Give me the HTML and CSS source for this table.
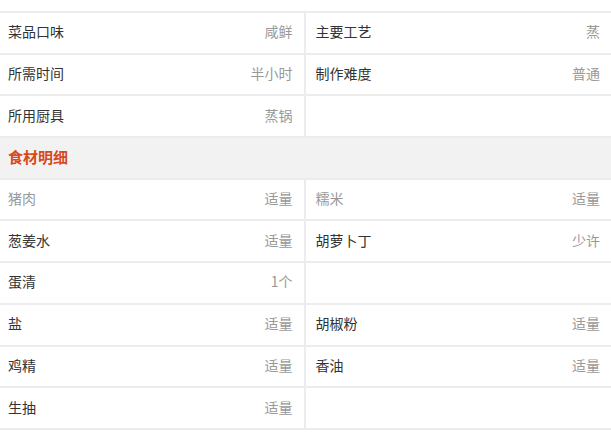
FILE: index.html
```html
<!DOCTYPE html>
<html lang="zh-CN">
<head>
<meta charset="utf-8">
<title>食材明细</title>
<link rel="stylesheet" href="styles.css">
</head>
<body>
<div class="info">
  <div class="grid">
    <div class="cell"><span class="label">菜品口味</span><span class="value">咸鲜</span></div>
    <div class="cell"><span class="label">主要工艺</span><span class="value">蒸</span></div>
    <div class="cell"><span class="label">所需时间</span><span class="value">半小时</span></div>
    <div class="cell"><span class="label">制作难度</span><span class="value">普通</span></div>
    <div class="cell"><span class="label">所用厨具</span><span class="value">蒸锅</span></div>
    <div class="cell"></div>
  </div>
  <div class="section-title">食材明细</div>
  <div class="grid">
    <div class="cell"><span class="label link">猪肉</span><span class="value">适量</span></div>
    <div class="cell"><span class="label link">糯米</span><span class="value">适量</span></div>
    <div class="cell"><span class="label">葱姜水</span><span class="value">适量</span></div>
    <div class="cell"><span class="label">胡萝卜丁</span><span class="value">少许</span></div>
    <div class="cell"><span class="label">蛋清</span><span class="value">1个</span></div>
    <div class="cell"></div>
    <div class="cell"><span class="label">盐</span><span class="value">适量</span></div>
    <div class="cell"><span class="label">胡椒粉</span><span class="value">适量</span></div>
    <div class="cell"><span class="label">鸡精</span><span class="value">适量</span></div>
    <div class="cell"><span class="label">香油</span><span class="value">适量</span></div>
    <div class="cell"><span class="label">生抽</span><span class="value">适量</span></div>
    <div class="cell"></div>
  </div>
</div>
</body>
</html>
```
FILE: styles.css
```css
html, body {
  margin: 0;
  padding: 0;
  background: #fff;
}
body {
  font-family: "Noto Sans CJK SC", "Noto Sans", sans-serif;
  font-size: 14px;
  color: #333;
}
.info {
  margin-top: 11px;
  border-top: 2px solid #ececec;
}
.grid {
  display: grid;
  grid-template-columns: 1fr 1fr;
}
.cell {
  box-sizing: border-box;
  height: 41.7px;
  border-bottom: 2px solid #ececec;
  display: flex;
  align-items: center;
  justify-content: space-between;
  padding: 0 11px 3px 10px;
  line-height: 20px;
}
.cell:nth-child(odd) {
  border-right: 2px solid #ececec;
  padding-left: 8px;
}
.label {
  color: #333;
}
.label.link {
  color: #999;
}
.value {
  color: #999;
}
.section-title {
  box-sizing: border-box;
  height: 41.7px;
  background: #f2f2f2;
  border-bottom: 2px solid #ececec;
  display: flex;
  align-items: center;
  padding: 0 0 2px 8px;
  line-height: 20px;
  font-size: 15px;
  font-weight: bold;
  color: #d84a1b;
}
```
